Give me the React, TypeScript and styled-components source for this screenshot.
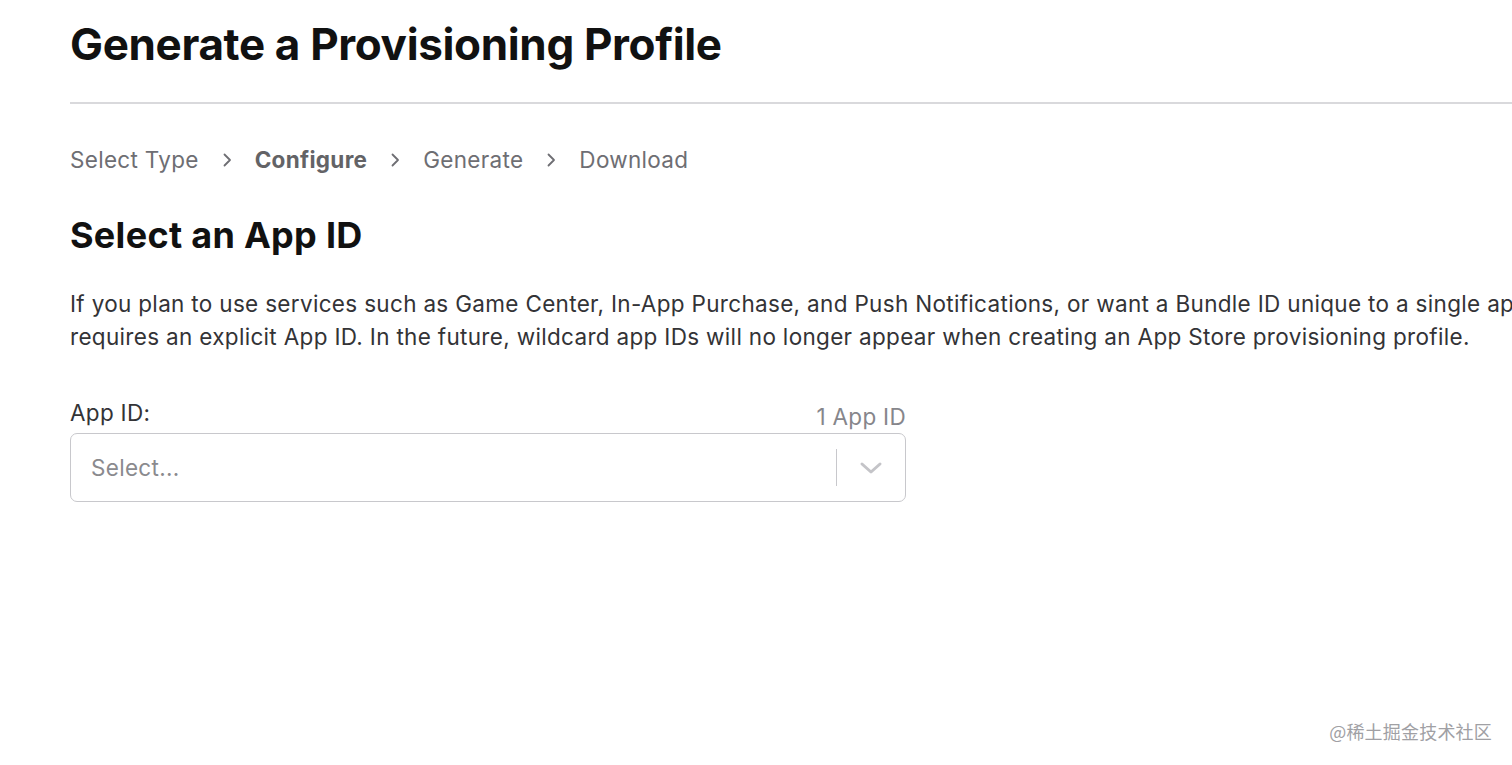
import React from "react";
import styled, { createGlobalStyle } from "styled-components";

const Global = createGlobalStyle`
  html, body { margin: 0; padding: 0; background: #fff; }
  body { overflow: hidden; font-family: Inter, "Noto Sans", "Liberation Sans", sans-serif; }
`;

const Page = styled.div`
  width: 1512px;
  height: 765px;
  overflow: hidden;
  position: relative;
  box-sizing: border-box;
  padding-left: 70px;
  color: #1d1d1f;
`;

const Title = styled.h1`
  margin: 0;
  padding-top: 17px;
  font-size: 44px;
  line-height: 54px;
  font-weight: 700;
  letter-spacing: -0.35px;
  color: #111;
`;

const Divider = styled.hr`
  margin: 31px 0 0 0;
  border: none;
  height: 2px;
  background: #d9d9dc;
`;

const Crumbs = styled.nav`
  display: flex;
  align-items: center;
  gap: 22px;
  margin-top: 40px;
  font-size: 22.5px;
  line-height: 32px;
  letter-spacing: 0.3px;
  color: #6e6e73;
  white-space: nowrap;
`;

const Crumb = styled.span<{ $active?: boolean }>`
  font-weight: ${(p) => (p.$active ? 700 : 400)};
  color: ${(p) => (p.$active ? "#636366" : "#6e6e73")};
`;

const Sep = styled.svg`
  width: 12px;
  height: 16px;
  flex: none;
`;

const Heading = styled.h2`
  margin: 36px 0 0 0;
  font-size: 36px;
  line-height: 46px;
  font-weight: 700;
  color: #111;
  letter-spacing: 0.3px;
`;

const Para = styled.p`
  margin: 29px 0 0 0;
  font-size: 22.5px;
  line-height: 33px;
  letter-spacing: 0.32px;
  color: #333336;
  white-space: nowrap;
`;

const Field = styled.div`
  width: 836px;
  margin-top: 45px;
`;

const FieldHead = styled.div`
  display: flex;
  justify-content: space-between;
  align-items: flex-end;
  letter-spacing: 0.3px;
`;

const Label = styled.label`
  font-size: 22.5px;
  line-height: 30px;
  color: #333336;
`;

const Count = styled.span`
  font-size: 22.5px;
  line-height: 30px;
  color: #86868b;
  transform: translateY(4px);
`;

const SelectBox = styled.div`
  margin-top: 5px;
  height: 69px;
  box-sizing: border-box;
  border: 1.5px solid #c8c8cc;
  border-radius: 7px;
  display: flex;
  align-items: center;
  padding-left: 20px;
`;

const Placeholder = styled.span`
  flex: 1;
  font-size: 22.5px;
  letter-spacing: 0.3px;
  color: #8a8a8e;
`;

const VLine = styled.span`
  width: 1.5px;
  height: 37px;
  background: #c8c8cc;
`;

const Chevron = styled.svg`
  width: 68px;
  height: 20px;
`;

const Watermark = styled.div`
  position: absolute;
  right: 20px;
  bottom: 21px;
  font-size: 18px;
  color: #a0a0a4;
  font-family: "Noto Sans CJK SC", "Noto Sans", sans-serif;
  letter-spacing: 0.2px;
`;

const Arrow = () => (
  <Sep viewBox="0 0 12 16">
    <path d="M3.5 2.5 L9 8 L3.5 13.5" fill="none" stroke="#6e6e73" strokeWidth="1.8" strokeLinecap="round" strokeLinejoin="round" />
  </Sep>
);

export default function App() {
  return (
    <>
      <Global />
      <Page>
        <Title>Generate a Provisioning Profile</Title>
        <Divider />
        <Crumbs>
          <Crumb>Select Type</Crumb>
          <Arrow />
          <Crumb $active>Configure</Crumb>
          <Arrow />
          <Crumb>Generate</Crumb>
          <Arrow />
          <Crumb>Download</Crumb>
        </Crumbs>
        <Heading>Select an App ID</Heading>
        <Para>
          If you plan to use services such as Game Center, In-App Purchase, and Push Notifications, or want a Bundle ID unique to a single app, use an explicit App ID. Xcode
          <br />
          requires an explicit App ID. In the future, wildcard app IDs will no longer appear when creating an App Store provisioning profile.
        </Para>
        <Field>
          <FieldHead>
            <Label>App ID:</Label>
            <Count>1 App ID</Count>
          </FieldHead>
          <SelectBox>
            <Placeholder>Select...</Placeholder>
            <VLine />
            <Chevron viewBox="0 0 68 20">
              <path d="M25 6 L34 14 L43 6" fill="none" stroke="#c4c4c8" strokeWidth="3" strokeLinecap="round" strokeLinejoin="round" />
            </Chevron>
          </SelectBox>
        </Field>
        <Watermark>@稀土掘金技术社区</Watermark>
      </Page>
    </>
  );
}
